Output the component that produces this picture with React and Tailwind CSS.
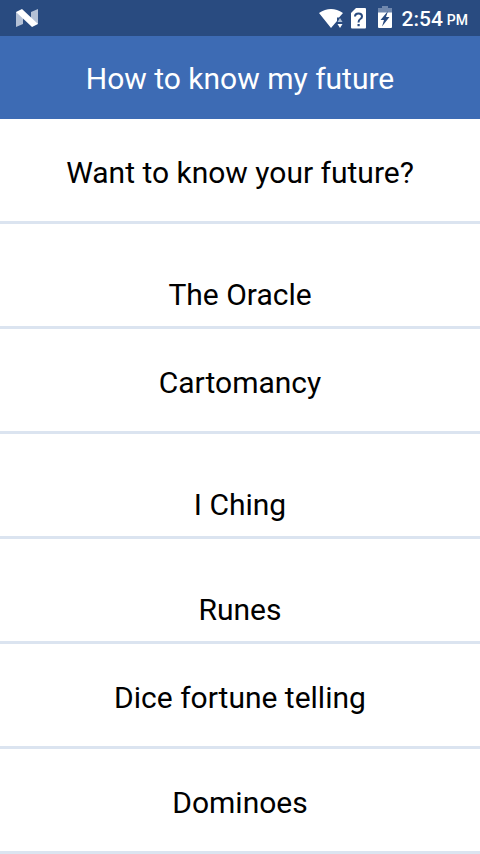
import React from 'react';

const items = [
  { label: 'Want to know your future?', low: false },
  { label: 'The Oracle', low: true },
  { label: 'Cartomancy', low: false },
  { label: 'I Ching', low: true },
  { label: 'Runes', low: true },
  { label: 'Dice fortune telling', low: false },
  { label: 'Dominoes', low: false }
];

const StatusBar = () => (
  <div className="flex h-9 items-center justify-between bg-[#294b80] pl-4 pr-3 text-white">
    {/* Nougat logo */}
    <svg className="h-5 w-6" viewBox="0 0 24 20" fill="none">
      <path d="M0 4h7v12l-7 3z" fill="#b4c1d6" />
      <path d="M22 1v15h-7V4z" fill="#b4c1d6" />
      <path d="M0 4L6 1l16 15-6 3z" fill="#fff" />
    </svg>
    <div className="flex items-center">
      {/* Wifi */}
      <svg className="h-6 w-6" viewBox="0 0 24 24" fill="#fff">
        <path d="M0 7Q12-1 24 7L20 11.500H18V15L12 22z" />
        <path d="M18.500 16l2.500-4 2.500 4z" fill="#aebfd6" />
        <path d="M18.500 18h5L21 22z" />
      </svg>
      {/* SIM card */}
      <svg className="ml-2 h-6 w-4" viewBox="0 0 16 24" fill="none">
        <path d="M5 2h9q1 0 1 1v18.500q0 1-1 1H1q-1 0-1-1V7z" fill="#fff" />
        <path d="M4 10.500Q4 7.500 7.500 7.500T11 10.500Q11 12 9.300 13T7.500 16.500" stroke="#294b80" strokeWidth="2" />
        <path d="M6.500 18h2.200v2.200H6.500z" fill="#294b80" />
      </svg>
      {/* Battery */}
      <svg className="ml-2.5 h-6 w-4" viewBox="0 0 16 24" fill="none">
        <path d="M5 0h6v2h4v5H1V2h4z" fill="#7088ae" />
        <path d="M1 6.500h14V21q0 1-1 1H2q-1 0-1-1z" fill="#fff" />
        <path d="M11 5L3.500 14H7l-2 6.500L12.500 11H9z" fill="#294b80" />
      </svg>
      <span className="ml-2 pt-0.5 text-[21px] font-medium leading-6">2:54</span>
      <span className="ml-1 pt-1 text-[14px] font-medium leading-6">PM</span>
    </div>
  </div>
);

const App = () => (
  <div className="min-h-screen bg-white font-['Roboto',sans-serif]">
    <StatusBar />
    <header className="flex h-[83px] items-center justify-center bg-[#3d6bb4] pt-0.5">
      <h1 className="text-[30px] leading-9 text-white">How to know my future</h1>
    </header>
    <nav>
      {items.map((item) => (
        <button
          key={item.label}
          type="button"
          className={`flex h-[105px] w-full justify-center border-b-3 border-[#dbe4f0] text-[30px] leading-9 text-black ${
            item.low ? 'items-end pb-[13px]' : 'items-center pt-1.5'
          }`}
        >
          {item.label}
        </button>
      ))}
    </nav>
  </div>
);

export default App;
